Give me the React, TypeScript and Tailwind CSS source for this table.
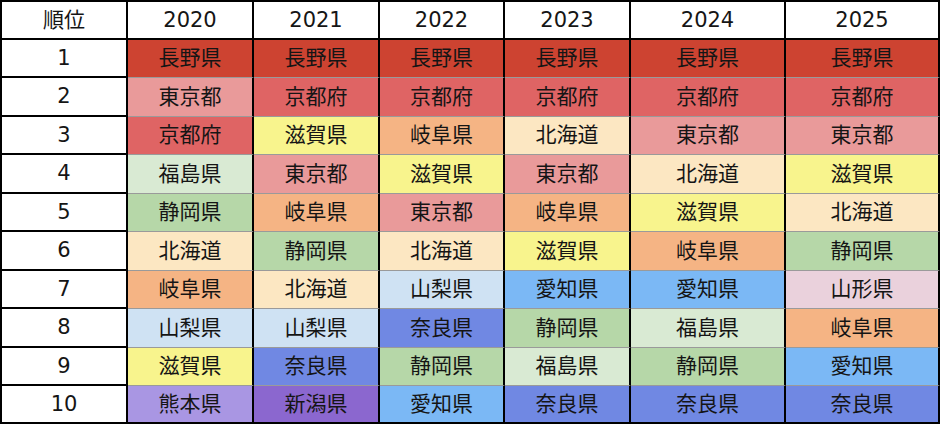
import React from "react";

const COLORS: Record<string, string> = {
  長野県: "#CD4331",
  京都府: "#DF6464",
  東京都: "#E99A9A",
  滋賀県: "#F8F48D",
  岐阜県: "#F5B484",
  北海道: "#FCE7C2",
  福島県: "#D9EAD3",
  静岡県: "#B6D7A8",
  山梨県: "#CFE2F3",
  愛知県: "#7BB8F5",
  奈良県: "#7088E3",
  熊本県: "#A996E3",
  新潟県: "#8B67CF",
  山形県: "#EAD1DC",
};

const YEARS = ["2020", "2021", "2022", "2023", "2024", "2025"];

const ROWS: string[][] = [
  ["長野県", "長野県", "長野県", "長野県", "長野県", "長野県"],
  ["東京都", "京都府", "京都府", "京都府", "京都府", "京都府"],
  ["京都府", "滋賀県", "岐阜県", "北海道", "東京都", "東京都"],
  ["福島県", "東京都", "滋賀県", "東京都", "北海道", "滋賀県"],
  ["静岡県", "岐阜県", "東京都", "岐阜県", "滋賀県", "北海道"],
  ["北海道", "静岡県", "北海道", "滋賀県", "岐阜県", "静岡県"],
  ["岐阜県", "北海道", "山梨県", "愛知県", "愛知県", "山形県"],
  ["山梨県", "山梨県", "奈良県", "静岡県", "福島県", "岐阜県"],
  ["滋賀県", "奈良県", "静岡県", "福島県", "静岡県", "愛知県"],
  ["熊本県", "新潟県", "愛知県", "奈良県", "奈良県", "奈良県"],
];

export default function App() {
  return (
    <div className="w-[940px] h-[426px] bg-white">
      <div
        className="grid grid-cols-[128px_126px_126px_125px_126px_155px_154px] grid-rows-[40px_38px_39px_38px_39px_38px_39px_38px_39px_38px_38px] text-[21px] leading-none text-[#151515]"
        style={{ fontFamily: '"DejaVu Sans", "Noto Sans CJK JP", sans-serif' }}
      >
        <div className="flex items-center justify-center border-l-2 border-t-2 border-r-2 border-b-2 border-black bg-white">
          順位
        </div>
        {YEARS.map((y) => (
          <div
            key={y}
            className="flex items-center justify-center border-t-2 border-r-2 border-b-2 border-black bg-white"
          >
            {y}
          </div>
        ))}
        {ROWS.map((row, i) => {
          const last = i === ROWS.length - 1;
          return (
            <React.Fragment key={i}>
              <div className="flex items-center justify-center border-l-2 border-r-2 border-b-2 border-black bg-white">
                {i + 1}
              </div>
              {row.map((p, j) => (
                <div
                  key={j}
                  className={
                    last
                      ? "flex items-center justify-center border-r-2 border-b-2 border-black"
                      : "flex items-center justify-center border-r-2 border-r-black border-b border-b-[#9a9a9a]"
                  }
                  style={{ backgroundColor: COLORS[p] }}
                >
                  {p}
                </div>
              ))}
            </React.Fragment>
          );
        })}
      </div>
    </div>
  );
}
